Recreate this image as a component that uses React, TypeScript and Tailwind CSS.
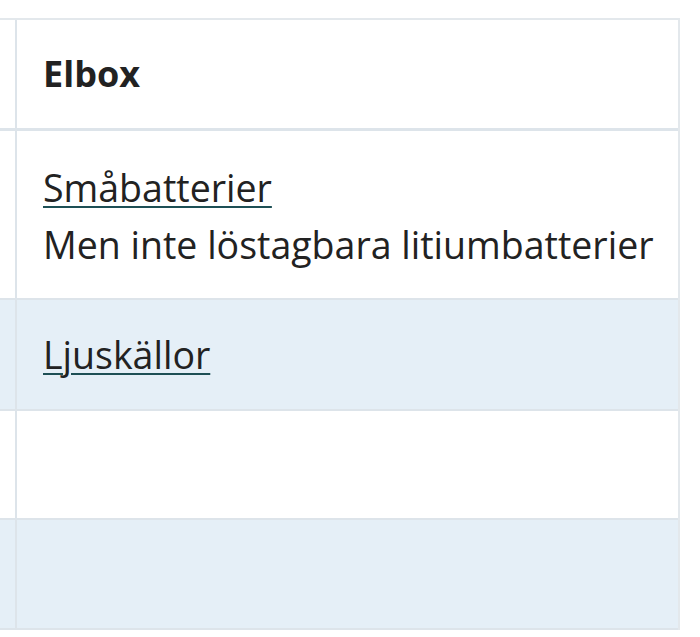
import React from "react";

const font = { fontFamily: '"Open Sans", "Noto Sans", sans-serif' };

function Row({
  blue,
  children,
  thick,
  pad,
}: {
  blue?: boolean;
  children?: React.ReactNode;
  thick?: boolean;
  pad: string;
}) {
  return (
    <div
      className={`flex ${blue ? "bg-[#e5eff7]" : "bg-white"} ${
        thick ? "border-b-[3px]" : "border-b-2"
      } border-[#dde4ea]`}
    >
      <div className="w-[17px] shrink-0 border-r-2 border-[#dde4ea]" />
      <div className={`flex-1 pl-[26px] pr-[8px] ${pad}`}>{children}</div>
    </div>
  );
}

export default function App() {
  return (
    <div className="min-h-[637px] w-[700px] bg-white pt-[18px]" style={font}>
      <div className="w-[680px] border-t-2 border-r-2 border-[#e3e8ec] text-[37.5px] leading-[57px] text-[#222222]">
        <Row thick pad="pt-[25px] pb-[26px]">
          <div className="text-[36px] font-bold">Elbox</div>
        </Row>
        <Row pad="pt-[28px] pb-[25px]">
          <div>
            <a
              href="#"
              className="underline decoration-[#1d4f55] decoration-2 underline-offset-[4px]"
            >
              Småbatterier
            </a>
          </div>
          <div className="whitespace-nowrap">Men inte löstagbara litiumbatterier</div>
        </Row>
        <Row blue pad="pt-[26px] pb-[26px]">
          <a
            href="#"
            className="underline decoration-[#1d4f55] decoration-2 underline-offset-[4px]"
          >
            Ljuskällor
          </a>
        </Row>
        <Row pad="h-[107px]" />
        <Row blue pad="h-[108px]" />
      </div>
    </div>
  );
}
